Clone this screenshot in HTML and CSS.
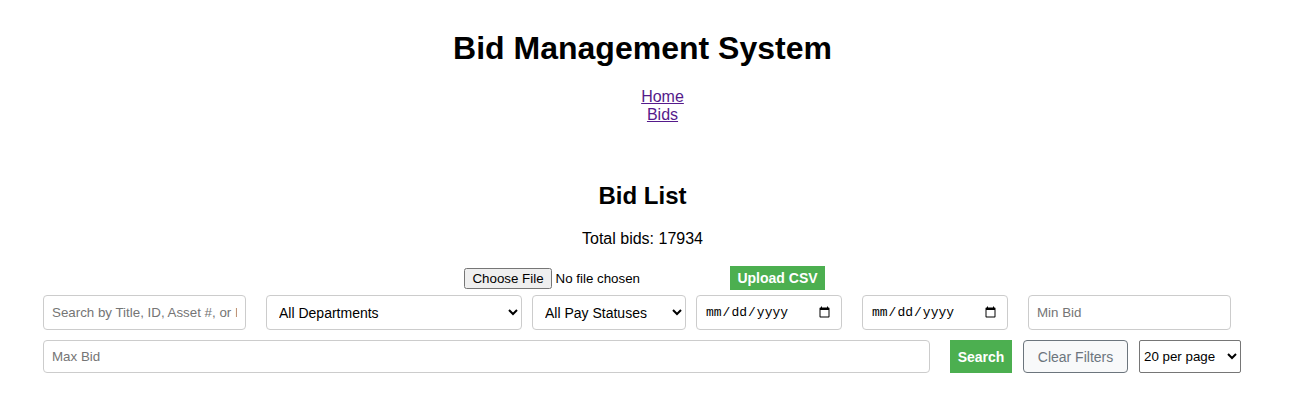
FILE: index.html
```html
<!DOCTYPE html>
<html>
<head>
<meta charset="utf-8">
<title>Bid Management System</title>
<link rel="stylesheet" href="styles.css">
</head>
<body>
<div class="page">
  <header>
    <h1 class="title">Bid Management System</h1>
    <nav>
      <ul class="nav-list">
        <li><a href="#" class="nav-link">Home</a></li>
        <li><a href="#" class="nav-link">Bids</a></li>
      </ul>
    </nav>
  </header>
  <main>
    <h2 class="subtitle">Bid List</h2>
    <p class="total">Total bids: 17934</p>
    <form class="upload-form">
      <input type="file" class="file-input">
      <button type="button" class="btn-green btn-upload">Upload CSV</button>
    </form>
    <div class="filters">
      <input type="text" class="field field-search" placeholder="Search by Title, ID, Asset #, or Item">
      <select class="field field-dept">
        <option>All Departments</option>
      </select>
      <select class="field field-pay">
        <option>All Pay Statuses</option>
      </select>
      <input type="date" class="field field-date">
      <input type="date" class="field field-date field-date2">
      <input type="number" class="field field-min" placeholder="Min Bid">
      <input type="number" class="field field-max" placeholder="Max Bid">
      <button type="button" class="btn-green btn-search">Search</button>
      <button type="button" class="btn-clear">Clear Filters</button>
      <select class="per-page">
        <option>20 per page</option>
      </select>
    </div>
  </main>
</div>
</body>
</html>
```

FILE: styles.css
```css
html, body {
  margin: 0;
  padding: 0;
  background: #ffffff;
}

body {
  font-family: "Liberation Sans", Arial, sans-serif;
  color: #000000;
}

.page {
  width: 1199px;
  margin-left: 43px;
  padding-top: 8px;
  text-align: center;
}

.title {
  font-size: 32px;
  font-weight: bold;
  margin: 22px 0 21px;
}

.nav-list {
  list-style: none;
  margin: 17px 0 16px;
  padding-left: 40px;
  font-size: 16px;
}

.nav-link {
  color: #551a8b;
}

.subtitle {
  font-size: 24px;
  font-weight: bold;
  margin: 58px 0 20px;
}

.total {
  font-size: 16px;
  margin: 16px 0;
}

.upload-form {
  display: flex;
  justify-content: center;
  align-items: center;
  gap: 13px;
  margin: 18px 0 5px;
  padding-left: 4px;
}

.file-input {
  font-family: "Liberation Sans", Arial, sans-serif;
  font-size: 13.33px;
}

.btn-green {
  background: #4caf50;
  color: #ffffff;
  border: none;
  font-family: "Liberation Sans", Arial, sans-serif;
  font-weight: bold;
  font-size: 14px;
  cursor: pointer;
}

.btn-upload {
  padding: 4px 7px;
  height: 24px;
}

.filters {
  display: flex;
  flex-wrap: wrap;
  gap: 10px 10px;
  text-align: left;
}

.field {
  box-sizing: border-box;
  height: 35px;
  padding: 8px;
  border: 1px solid #cccccc;
  border-radius: 4px;
  font-family: "Liberation Sans", Arial, sans-serif;
  font-size: 13.33px;
  background: #ffffff;
  color: #000000;
}

input.field {
  margin-right: 10px;
}

select.field {
  font-size: 14px;
}

.field::placeholder {
  color: #757575;
}

.field-search {
  width: 203px;
}

.field-dept {
  width: 256px;
}

.field-pay {
  width: 154px;
}

.field-date {
  width: 146px;
  font-family: "Liberation Mono", monospace;
  font-size: 13px;
}

.field-min {
  width: 203px;
}

.field-max {
  flex: 1;
  height: 33px;
}

.btn-search {
  width: 62px;
  height: 33px;
  padding: 0;
  margin-right: 1px;
}

.btn-clear {
  width: 105px;
  height: 33px;
  margin-right: 1px;
  background: #f8f9fa;
  border: 1px solid #6c757d;
  border-radius: 4px;
  color: #6c757d;
  font-family: "Liberation Sans", Arial, sans-serif;
  font-size: 14px;
  cursor: pointer;
}

.per-page {
  width: 102px;
  height: 33px;
  margin-right: 1px;
  font-family: "Liberation Sans", Arial, sans-serif;
  font-size: 13.33px;
  border: 1px solid #767676;
  border-radius: 2px;
  background: #ffffff;
  color: #000000;
}
```
